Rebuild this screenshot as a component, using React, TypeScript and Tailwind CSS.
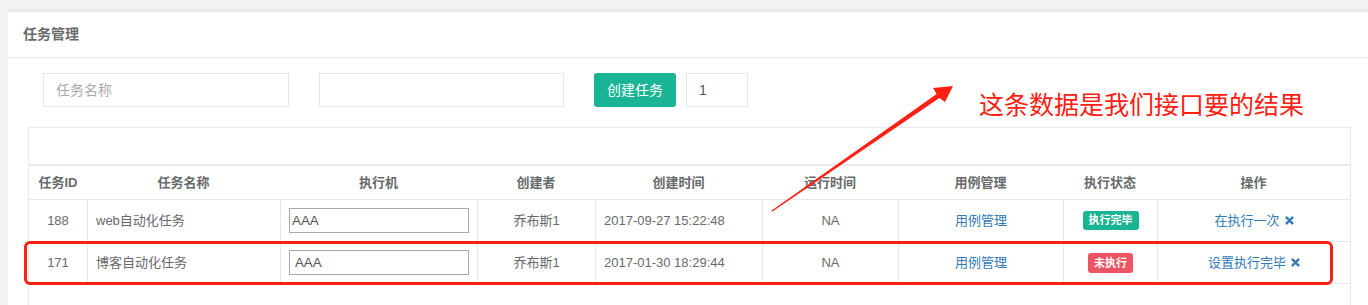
import React from 'react'

const FONT = '"Liberation Sans", "Noto Sans CJK SC", sans-serif'
const COLS = 'grid grid-cols-[58px_193px_197px_118px_167px_136px_165px_94px_1fr]'

type Row = { id: number; name: string; host: string; creator: string; created: string; run: string; done: boolean; action: string }

const ROWS: Row[] = [
  { id: 188, name: 'web自动化任务', host: 'AAA', creator: '乔布斯1', created: '2017-09-27 15:22:48', run: 'NA', done: true, action: '在执行一次' },
  { id: 171, name: '博客自动化任务', host: ' AAA', creator: '乔布斯1', created: '2017-01-30 18:29:44', run: 'NA', done: false, action: '设置执行完毕' },
]

const HEAD = ['任务ID', '任务名称', '执行机', '创建者', '创建时间', '运行时间', '用例管理', '执行状态', '操作']

function Times() {
  return (
    <svg width="9" height="9" viewBox="0 0 10 10" className="inline-block ml-[5px] align-[-1px]">
      <path d="M1.8 1.8 L8.2 8.2 M8.2 1.8 L1.8 8.2" stroke="#337ab7" strokeWidth="2.7" strokeLinecap="round" />
    </svg>
  )
}

export default function App() {
  return (
    <div className="relative w-[1368px] h-[305px] overflow-hidden bg-[#f3f3f4] pt-[9px] pl-2 text-[13px] text-[#676a6c]" style={{ fontFamily: FONT }}>
      <div className="bg-white border-t-[3px] border-[#e7eaec] h-[400px]">
        <div className="h-[46px] px-[15px] flex items-center border-b border-[#e7eaec]">
          <h5 className="text-[14px] font-bold text-[#676a6c]">任务管理</h5>
        </div>
        <div className="pt-[15px] px-5">
          <div className="flex items-center ml-[15px]">
            <input placeholder="任务名称" className="w-[246px] h-[34px] border border-[#e5e6e7] px-3 text-[14px] outline-none placeholder:text-[#a9a9a9]" />
            <input className="w-[245px] h-[34px] border border-[#e5e6e7] px-3 text-[14px] outline-none ml-[30px]" />
            <button className="ml-[30px] w-[82px] h-[34px] rounded-[3px] bg-[#1ab394] text-white text-[14px]">创建任务</button>
            <input defaultValue="1" className="ml-[10px] w-[62px] h-[34px] border border-[#e5e6e7] px-3 text-[14px] text-[#555] outline-none" />
          </div>

          <div className="mt-5 w-[1323px] h-[300px] border border-[#e7eaec]">
            <div className="h-[38px] border-b-2 border-[#e7eaec]" />
            <div className={`${COLS} h-[34px] border-b border-[#e7e7e7] font-bold`}>
              {HEAD.map(h => (
                <div key={h} className="flex items-center justify-center">{h}</div>
              ))}
            </div>
            {ROWS.map(r => (
              <div key={r.id} className={`${COLS} h-[42px] border-b border-[#e7e7e7]`}>
                <div className="flex items-center justify-center">{r.id}</div>
                <div className="flex items-center pl-2 border-l border-[#e7e7e7]">{r.name}</div>
                <div className="flex items-center pl-2 border-l border-[#e7e7e7]">
                  <input defaultValue={r.host} className="w-[180px] h-[25px] border border-[#a9a9a9] px-[2px] text-[13.33px] text-[#555] outline-none" style={{ fontFamily: FONT }} />
                </div>
                <div className="flex items-center justify-center border-l border-[#e7e7e7]">{r.creator}</div>
                <div className="flex items-center pl-2 border-l border-[#e7e7e7]">{r.created}</div>
                <div className="flex items-center justify-center border-l border-[#e7e7e7]">{r.run}</div>
                <div className="flex items-center justify-center border-l border-[#e7e7e7]">
                  <a className="text-[#337ab7] cursor-pointer">用例管理</a>
                </div>
                <div className="flex items-center justify-center border-l border-[#e7e7e7]">
                  {r.done
                    ? <span className="px-[6px] h-[19px] leading-[19px] rounded-[3px] bg-[#1ab394] text-white text-[11px] font-bold">执行完毕</span>
                    : <span className="px-[6px] h-[20px] leading-[20px] rounded-[3px] bg-[#ed5565] text-white text-[11px] font-bold">未执行</span>}
                </div>
                <div className="flex items-center justify-center border-l border-[#e7e7e7]">
                  <a className="text-[#337ab7] cursor-pointer">{r.action}</a>
                  <Times />
                </div>
              </div>
            ))}
          </div>
        </div>
      </div>

      {/* annotation overlay */}
      <div className="absolute left-[24px] top-[241px] w-[1309px] h-[44px] border-[3px] border-[#ff2014] rounded-[6px] pointer-events-none" />
      <svg className="absolute left-0 top-0 pointer-events-none" width="1368" height="305">
        <polygon points="771,211 936.6,93.9 933,88 953,86 945,102 939.4,98.1 772.5,211.5" fill="#ff2014" />
      </svg>
      <div className="absolute left-[979px] top-[93px] text-[25px] leading-none text-[#ff2014] whitespace-nowrap">这条数据是我们接口要的结果</div>
    </div>
  )
}
